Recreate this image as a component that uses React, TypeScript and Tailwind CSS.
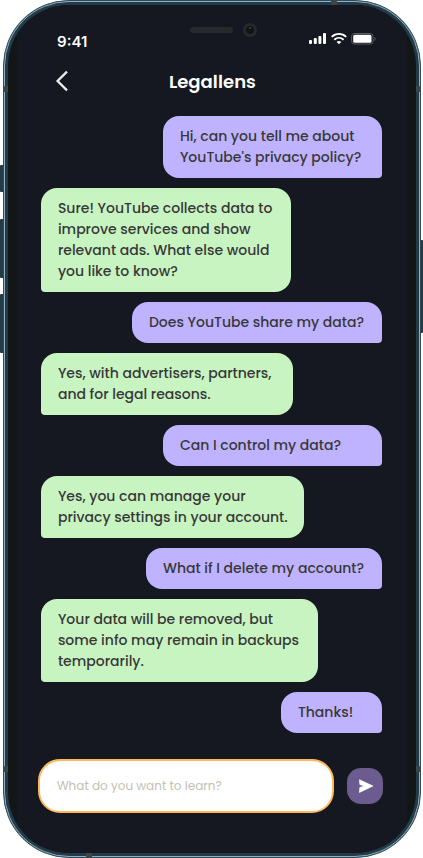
type Message = { mine?: boolean; box: string; lines: string[] };

const messages: Message[] = [
  { mine: true, box: "w-[219px]", lines: ["Hi, can you tell me about", "YouTube's privacy policy?"] },
  {
    box: "w-[250px]",
    lines: [
      "Sure! YouTube collects data to",
      "improve services and show",
      "relevant ads. What else would",
      "you like to know?",
    ],
  },
  { mine: true, box: "w-[250px]", lines: ["Does YouTube share my data?"] },
  { box: "w-[252px]", lines: ["Yes, with advertisers, partners,", "and for legal reasons."] },
  { mine: true, box: "w-[219px]", lines: ["Can I control my data?"] },
  { box: "w-[263px]", lines: ["Yes, you can manage your", "privacy settings in your account."] },
  { mine: true, box: "w-[236px]", lines: ["What if I delete my account?"] },
  {
    box: "w-[277px]",
    lines: ["Your data will be removed, but", "some info may remain in backups", "temporarily."],
  },
  { mine: true, box: "w-[101px]", lines: ["Thanks!"] },
];

function Bubble({ mine, box, lines }: Message) {
  const look = mine
    ? "self-end rounded-[16px] rounded-br-[4px] bg-[#bfb3ff]"
    : "self-start rounded-[16px] rounded-bl-[4px] bg-[#c8f4c2]";
  return (
    <div className={`${box} ${look} py-[10px] pl-[17.4px] text-sm font-medium leading-[21px] text-[#383838]`}>
      {lines.map((line) => (
        <p key={line} className="whitespace-nowrap">
          {line}
        </p>
      ))}
    </div>
  );
}

function StatusIcons() {
  return (
    <svg width="69" height="14" viewBox="0 0 69 14" fill="none" className="mt-[5px] ml-auto">
      <g fill="#fff">
        <rect x="0" y="8" width="3" height="4" rx="1" />
        <rect x="4.8" y="6" width="3" height="6" rx="1" />
        <rect x="9.4" y="4" width="3" height="8" rx="1" />
        <rect x="14" y="1" width="3" height="11" rx="1" />
      </g>
      <g stroke="#fff" strokeWidth="1.9">
        <path d="M22.7 4.9c4.2-4 10.3-4 14.5 0" />
        <path d="M25.3 7.7c2.7-2.5 6.6-2.5 9.3 0" />
      </g>
      <path d="M27.6 9.9c1.4-1.2 3.3-1.2 4.7 0L30 12.3z" fill="#fff" />
      <rect x="42.6" y="1.5" width="21.5" height="10.5" rx="2.8" stroke="#5b5c61" />
      <rect x="44.2" y="2.8" width="18.3" height="8" rx="1.6" fill="#fff" />
      <path d="M65.5 5v4c1.5-.7 1.5-3.3 0-4z" fill="#5b5c61" />
    </svg>
  );
}

/* Antenna bands printed over the metal frame. */
function AntennaBands() {
  return (
    <>
      <i className="absolute left-0 top-[85px] h-[6px] w-[4px] bg-[#3b464b]" />
      <i className="absolute right-0 top-[85px] h-[6px] w-[4px] bg-[#3b464b]" />
      <i className="absolute left-0 top-[765px] h-[6px] w-[4px] bg-[#3b464b]" />
      <i className="absolute right-0 top-[765px] h-[6px] w-[4px] bg-[#3b464b]" />
      <i className="absolute -top-px left-[327px] h-[5px] w-[6px] bg-[#3b464b]" />
      <i className="absolute -bottom-px left-[82px] h-[5px] w-[6px] bg-[#3b464b]" />
    </>
  );
}

export default function App() {
  return (
    <div className="flex h-[858px] w-[423px] overflow-hidden bg-white font-['Poppins','Inter',sans-serif] antialiased">
      <div className="flex w-[3px] flex-col pt-[165px]">
        <span className="h-[27px] rounded-l-[1px] bg-[#233a47]" />
        <span className="mt-[27px] h-[59px] rounded-l-[1px] bg-[#233a47]" />
        <span className="mt-4 h-[59px] rounded-l-[1px] bg-[#233a47]" />
      </div>
      <div className="relative flex-1 rounded-[66px] border border-[#304b5b] bg-[#233a47]">
        <div className="h-[856px] rounded-[65px] border border-[#91afc0] p-[3px]">
          <div className="h-[848px] overflow-hidden rounded-[61px] bg-[#121616] px-[9px]">
            <div className="flex h-[848px] flex-col bg-[#151820] pl-[21px] pr-[24px]">
              <header className="flex h-[50px] items-start pl-[19px] pr-[5px] pt-[22px]">
                <span className="w-[133px] pl-[0.6px] pt-[5px] font-['Inter',sans-serif] text-[15px] font-semibold leading-[20px] text-white">
                  9:41
                </span>
                <div className="flex h-[6px] items-center gap-[10px]">
                  <span className="h-[6px] w-[43px] rounded-full bg-[#262a2d]" />
                  <span className="flex h-[14px] w-[14px] justify-center rounded-full border-[3px] border-[#262a2d] bg-[#101415] pt-px">
                    <i className="h-[2px] w-[2px] rounded-full bg-[#42484c]" />
                  </span>
                </div>
                <StatusIcons />
              </header>
              <div className="flex h-[61px] items-start pt-[13px] pl-[17px] pr-[17px] text-white">
                <svg width="14" height="26" viewBox="0 0 14 26" fill="none">
                  <path d="M11.2 4.5 2.6 13l8.6 8.5" stroke="#ececee" strokeWidth="2.3" strokeLinecap="square" />
                </svg>
                <h1 className="ml-[100.4px] text-lg font-semibold leading-[27px] tracking-[0.05px]">Legallens</h1>
              </div>
              <main className="flex flex-col gap-[10px] pl-[3px] pr-px">
                {messages.map((message) => (
                  <Bubble key={message.lines[0]} {...message} />
                ))}
              </main>
              <footer className="mt-[26px] flex items-center gap-[13px]">
                <div className="h-[54px] w-[296px] rounded-[22px] border-2 border-[#fdb85b] bg-white pl-[17.4px] text-xs leading-[50px] text-[#c5bfb3]">
                  What do you want to learn?
                </div>
                <button className="flex h-[36px] w-[36px] shrink-0 items-center justify-center rounded-[14px] bg-[#6c5b8e] pl-[2px]">
                  <svg width="16" height="16" viewBox="0 0 16 16">
                    <path
                      d="M1.5 1.8 14.8 8 1.5 14.4 1.9 9.5 7 8 1.9 6.6z"
                      fill="#fff"
                      stroke="#fff"
                      strokeWidth=".8"
                      strokeLinejoin="round"
                    />
                  </svg>
                </button>
              </footer>
            </div>
          </div>
        </div>
        <AntennaBands />
      </div>
      <div className="flex w-[3px] flex-col pt-[240px]">
        <span className="h-[93px] rounded-r-[1px] bg-[#233a47]" />
      </div>
    </div>
  );
}
